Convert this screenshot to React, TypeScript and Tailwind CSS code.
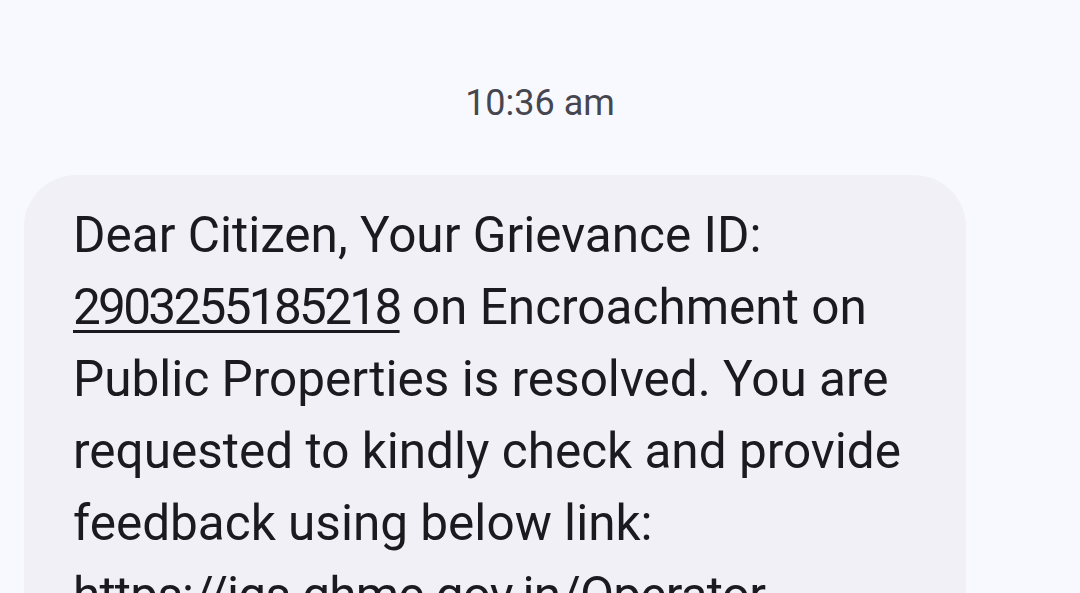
export default function App() {
  const lines = [
    "Dear Citizen, Your Grievance ID:",
    null,
    "Public Properties is resolved. You are",
    "requested to kindly check and provide",
    "feedback using below link:",
  ];

  return (
    <div className="h-[593px] w-[1080px] overflow-hidden bg-[#f8f9fe] font-['Roboto',sans-serif]">
      <div className="pt-[83px] text-center text-[36px] leading-[40px] text-[#46464f]">10:36 am</div>
      <div className="ml-[24px] mt-[52px] w-[942px] rounded-[52px] bg-[#f0f0f6] pb-10 pl-[49px] pr-[40px] pt-[24px] text-[49.5px] leading-[72px] text-[#1b1b1f]">
        {lines.map((line, i) =>
          line === null ? (
            <div key={i} className="whitespace-nowrap">
              <span className="underline decoration-[3px] underline-offset-[6px] tracking-[-2.7px]">2903255185218</span> on Encroachment on
            </div>
          ) : (
            <div key={i} className="whitespace-nowrap">
              {line}
            </div>
          )
        )}
        <div className="whitespace-nowrap tracking-[-0.8px] underline decoration-[3px] underline-offset-[6px]">
          https://igs.ghmc.gov.in/Operator
        </div>
      </div>
    </div>
  );
}
